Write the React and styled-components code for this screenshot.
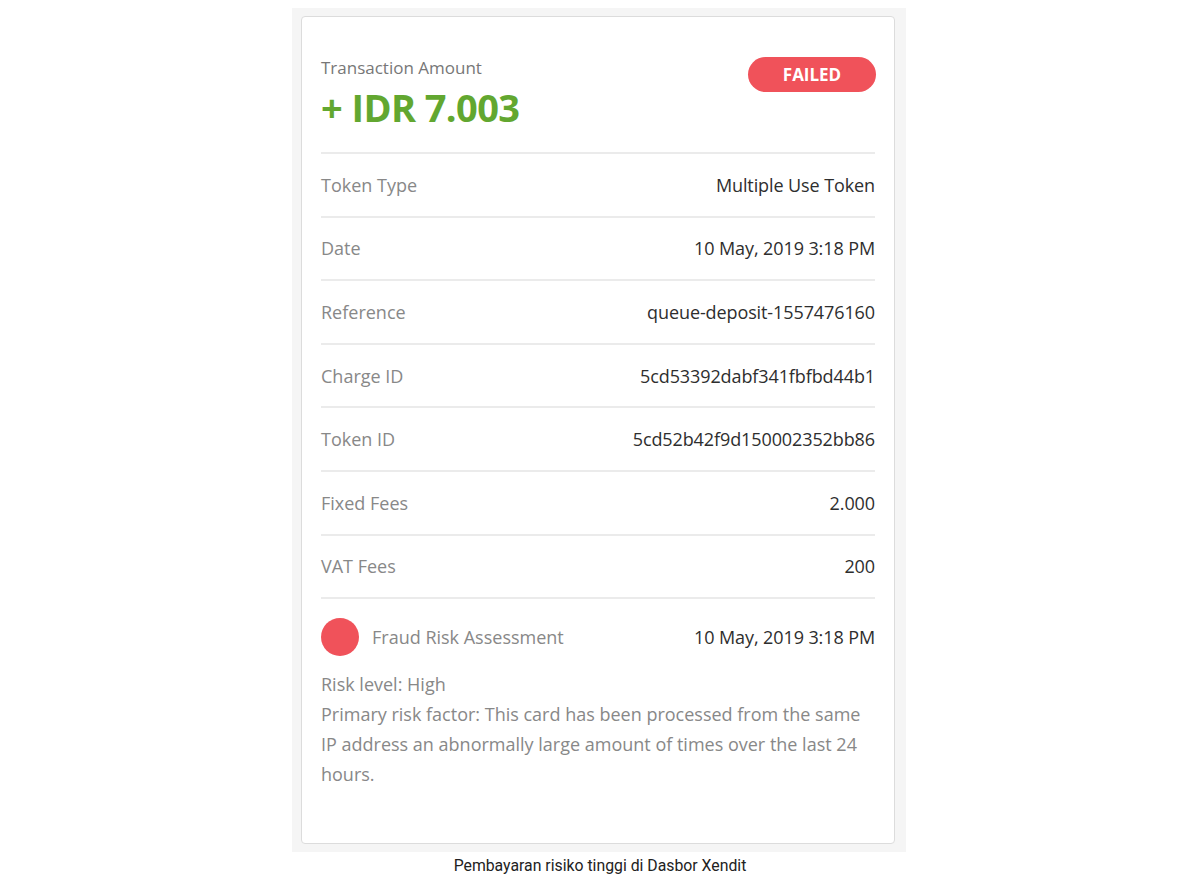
import React from "react";
import styled, { createGlobalStyle } from "styled-components";

const GlobalStyle = createGlobalStyle`
  body {
    margin: 0;
    background: #ffffff;
    font-family: "Open Sans", "Liberation Sans", sans-serif;
  }
`;

const Page = styled.div`
  width: 1200px;
  display: flex;
  flex-direction: column;
  align-items: center;
  padding-top: 8px;
`;

const Frame = styled.div`
  width: 614px;
  margin-right: 2px;
  box-sizing: border-box;
  background: #f5f5f5;
  padding: 8px 11px 8px 9px;
`;

const Card = styled.div`
  background: #ffffff;
  border: 1px solid #dcdcdc;
  border-radius: 4px;
  padding: 36px 19px 54px 19px;
`;

const Header = styled.div`
  display: flex;
  justify-content: space-between;
  align-items: flex-start;
  padding-bottom: 21px;
  border-bottom: 2px solid #ebebeb;
`;

const AmountLabel = styled.div`
  font-size: 17px;
  color: #777777;
  line-height: 30px;
`;

const Amount = styled.div`
  font-size: 38px;
  font-weight: 700;
  color: #62a730;
  line-height: 48px;
  letter-spacing: -0.6px;
`;

const Badge = styled.div`
  margin-top: 4px;
  margin-right: -1px;
  width: 128px;
  height: 35px;
  border-radius: 18px;
  background: #f0525a;
  color: #ffffff;
  font-size: 17px;
  font-weight: 700;
  display: flex;
  align-items: center;
  justify-content: center;
`;

const Row = styled.div`
  display: flex;
  justify-content: space-between;
  align-items: center;
  height: 61.6px;
  border-bottom: 2px solid #ebebeb;
`;

const Label = styled.span`
  font-size: 18px;
  color: #888888;
`;

const Value = styled.span`
  font-size: 18px;
  color: #2e2e2e;
  letter-spacing: -0.1px;
`;

const RiskHead = styled.div`
  display: flex;
  justify-content: space-between;
  align-items: center;
  padding: 19px 0 13px;
`;

const RiskTitle = styled.div`
  display: flex;
  align-items: center;
  gap: 13px;
`;

const Dot = styled.span`
  width: 38px;
  height: 38px;
  border-radius: 50%;
  background: #f0525a;
`;

const RiskText = styled.div`
  font-size: 18px;
  line-height: 30px;
  color: #888888;
`;

const Caption = styled.div`
  font-family: Roboto, "Liberation Sans", sans-serif;
  font-size: 15.8px;
  color: #222222;
  padding-top: 4px;
  line-height: 19px;
`;

const rows = [
  ["Token Type", "Multiple Use Token"],
  ["Date", "10 May, 2019 3:18 PM"],
  ["Reference", "queue-deposit-1557476160"],
  ["Charge ID", "5cd53392dabf341fbfbd44b1"],
  ["Token ID", "5cd52b42f9d150002352bb86"],
  ["Fixed Fees", "2.000"],
  ["VAT Fees", "200"],
];

export default function App() {
  return (
    <Page>
      <GlobalStyle />
      <Frame>
        <Card>
          <Header>
            <div>
              <AmountLabel>Transaction Amount</AmountLabel>
              <Amount>+ IDR 7.003</Amount>
            </div>
            <Badge>FAILED</Badge>
          </Header>
          {rows.map(([label, value]) => (
            <Row key={label}>
              <Label>{label}</Label>
              <Value>{value}</Value>
            </Row>
          ))}
          <RiskHead>
            <RiskTitle>
              <Dot />
              <Label>Fraud Risk Assessment</Label>
            </RiskTitle>
            <Value>10 May, 2019 3:18 PM</Value>
          </RiskHead>
          <RiskText>
            Risk level: High
            <br />
            Primary risk factor: This card has been processed from the same IP
            address an abnormally large amount of times over the last 24 hours.
          </RiskText>
        </Card>
      </Frame>
      <Caption>Pembayaran risiko tinggi di Dasbor Xendit</Caption>
    </Page>
  );
}
